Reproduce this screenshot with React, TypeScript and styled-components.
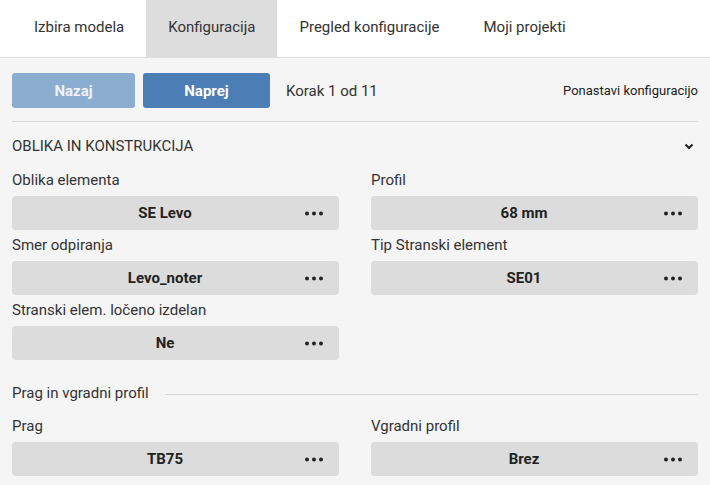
import styled, { createGlobalStyle } from "styled-components";

const GlobalStyle = createGlobalStyle`
  html, body {
    margin: 0;
    padding: 0;
    background: #f5f5f5;
    font-family: Roboto, "Liberation Sans", Arial, sans-serif;
    color: #333;
  }
  * { box-sizing: border-box; }
`;

const Page = styled.div`
  width: 710px;
  min-height: 485px;
  background: #f5f5f5;
  overflow: hidden;
`;

const TabBar = styled.div`
  display: flex;
  height: 58px;
  padding-left: 12px;
  background: #fff;
  border-bottom: 1px solid #dedede;
`;

const Tab = styled.div<{ active?: boolean }>`
  display: flex;
  align-items: center;
  padding: 0 22px 3px;
  font-size: 15px;
  color: #333;
  background: ${(p) => (p.active ? "#dddddd" : "transparent")};
`;

const Content = styled.div`
  padding: 15px 12px 0;
`;

const Toolbar = styled.div`
  display: flex;
  align-items: center;
  gap: 8px;
  padding-bottom: 13px;
  border-bottom: 1px solid #d8d8d8;
`;

const StepButton = styled.button<{ disabled?: boolean }>`
  height: 35px;
  width: ${(p) => (p.disabled ? "123px" : "127px")};
  border: none;
  border-radius: 3px;
  font-family: inherit;
  font-size: 15px;
  font-weight: 700;
  color: ${(p) => (p.disabled ? "#eef3f8" : "#fff")};
  background: ${(p) => (p.disabled ? "#8badd0" : "#4a7eb4")};
`;

const StepText = styled.span`
  margin-left: 8px;
  font-size: 15px;
  color: #333;
  flex: 1;
`;

const ResetLink = styled.span`
  font-size: 13px;
  color: #222;
`;

const SectionHeader = styled.div`
  display: flex;
  align-items: center;
  justify-content: space-between;
  height: 48px;
  font-size: 15px;
  color: #333;
  padding-right: 4px;
`;

const FieldGrid = styled.div`
  display: grid;
  grid-template-columns: 327px 327px;
  column-gap: 32px;
  row-gap: 5px;
`;

const Field = styled.div`
  display: flex;
  flex-direction: column;
`;

const Label = styled.div`
  font-size: 15px;
  line-height: 20px;
  color: #333;
  margin-bottom: 6px;
`;

const ValueBox = styled.div`
  display: flex;
  align-items: center;
  height: 34px;
  padding: 0 16px 0 13px;
  border-radius: 4px;
  background: #dcdcdc;
`;

const Value = styled.span`
  flex: 1;
  text-align: center;
  font-size: 15px;
  font-weight: 700;
  color: #222;
`;

const SubHeader = styled.div`
  display: flex;
  align-items: center;
  gap: 16px;
  margin: 23px 0 13px;
  font-size: 15px;
  line-height: 20px;
  color: #333;

  &::after {
    content: "";
    flex: 1;
    height: 1px;
    margin-top: 3px;
    background: #d8d8d8;
  }
`;

const Dots = () => (
  <svg width="18" height="5" viewBox="0 0 18 5">
    <circle cx="2" cy="2.5" r="2" fill="#222" />
    <circle cx="9" cy="2.5" r="2" fill="#222" />
    <circle cx="16" cy="2.5" r="2" fill="#222" />
  </svg>
);

const Chevron = () => (
  <svg width="10" height="7" viewBox="0 0 10 7">
    <path d="M1.5 1.5 L5 5 L8.5 1.5" fill="none" stroke="#222" strokeWidth="2" />
  </svg>
);

function SelectField({ label, value }: { label: string; value: string }) {
  return (
    <Field>
      <Label>{label}</Label>
      <ValueBox>
        <Value>{value}</Value>
        <Dots />
      </ValueBox>
    </Field>
  );
}

export default function App() {
  return (
    <Page>
      <GlobalStyle />
      <TabBar>
        <Tab>Izbira modela</Tab>
        <Tab active>Konfiguracija</Tab>
        <Tab>Pregled konfiguracije</Tab>
        <Tab>Moji projekti</Tab>
      </TabBar>
      <Content>
        <Toolbar>
          <StepButton disabled>Nazaj</StepButton>
          <StepButton>Naprej</StepButton>
          <StepText>Korak 1 od 11</StepText>
          <ResetLink>Ponastavi konfiguracijo</ResetLink>
        </Toolbar>
        <SectionHeader>
          <span>OBLIKA IN KONSTRUKCIJA</span>
          <Chevron />
        </SectionHeader>
        <FieldGrid>
          <SelectField label="Oblika elementa" value="SE Levo" />
          <SelectField label="Profil" value="68 mm" />
          <SelectField label="Smer odpiranja" value="Levo_noter" />
          <SelectField label="Tip Stranski element" value="SE01" />
          <SelectField label="Stranski elem. ločeno izdelan" value="Ne" />
        </FieldGrid>
        <SubHeader>Prag in vgradni profil</SubHeader>
        <FieldGrid>
          <SelectField label="Prag" value="TB75" />
          <SelectField label="Vgradni profil" value="Brez" />
        </FieldGrid>
      </Content>
    </Page>
  );
}
